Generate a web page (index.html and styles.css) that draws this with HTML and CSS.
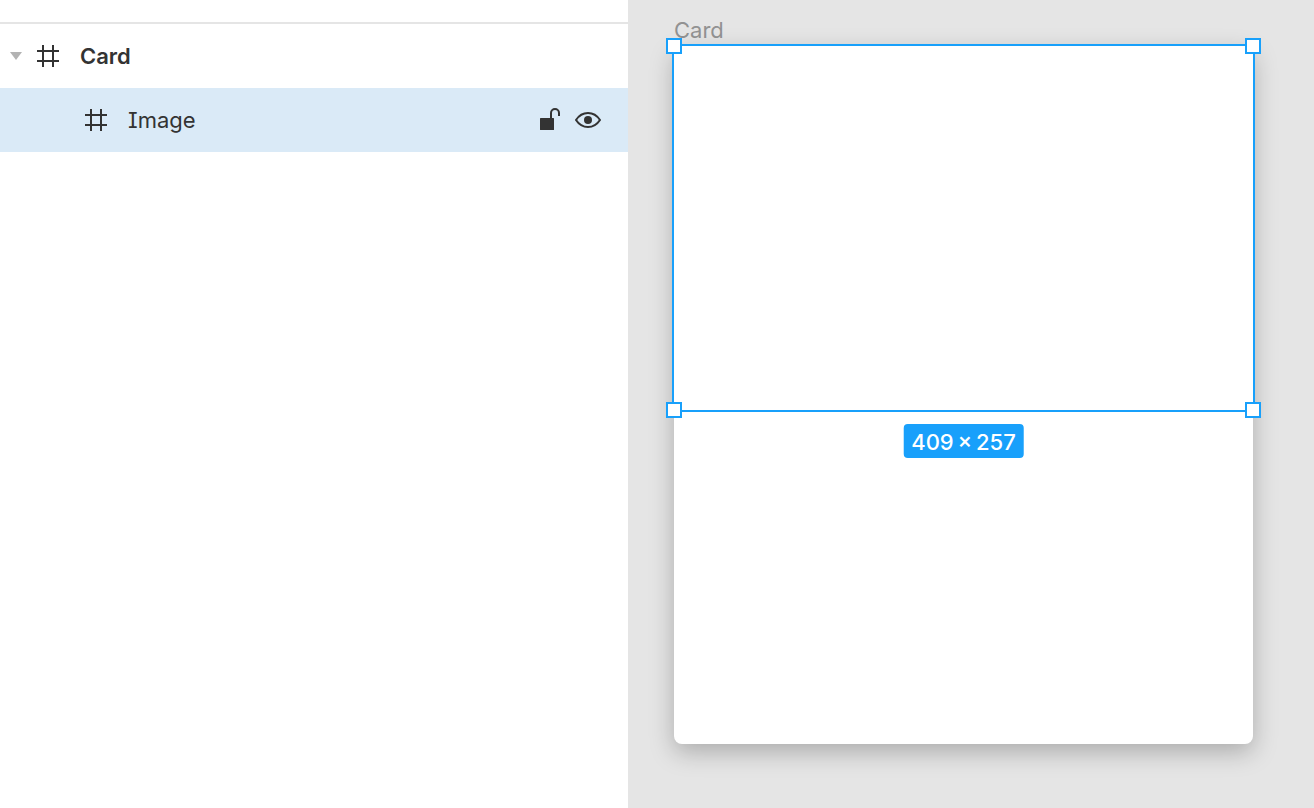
FILE: index.html
```html
<!DOCTYPE html>
<html lang="en">

<head>
    <meta charset="UTF-8">
    <meta name="viewport" content="width=device-width, initial-scale=1.0">
    <title>Card</title>
    <link rel="stylesheet" href="styles.css">
</head>

<body>
    <div class="editor">
        <aside class="layers">
            <div class="layers-header"></div>
            <ul class="layer-list">
                <li class="layer">
                    <button type="button" class="toggle" aria-label="Collapse Card" aria-expanded="true">
                        <svg width="12" height="8" viewBox="0 0 12 8"><path d="M0 0h12L6 8z" fill="#b3b3b3"/></svg>
                    </button>
                    <svg class="frame-icon" width="22" height="22" viewBox="0 0 22 22"><path d="M6 0v22M16 0v22M0 6h22M0 16h22" stroke="#333" stroke-width="2"/></svg>
                    <span class="layer-name bold">Card</span>
                </li>
                <li class="layer child selected">
                    <svg class="frame-icon" width="22" height="22" viewBox="0 0 22 22"><path d="M6 0v22M16 0v22M0 6h22M0 16h22" stroke="#333" stroke-width="2"/></svg>
                    <span class="layer-name">Image</span>
                    <span class="actions">
                        <button type="button" aria-label="Lock layer">
                            <svg width="20" height="24" viewBox="0 0 20 24">
                                <rect y="10" width="14" height="12" rx="0.5" fill="#333"/>
                                <path d="M11 11V5a4 4 0 0 1 8 0v3" fill="none" stroke="#333" stroke-width="2"/>
                            </svg>
                        </button>
                        <button type="button" aria-label="Hide layer">
                            <svg width="26" height="16" viewBox="0 0 26 16">
                                <path d="M1 8C4 3.400 8.200 1 13 1s9 2.400 12 7c-3 4.600-7.200 7-12 7S4 12.600 1 8z" fill="none" stroke="#333" stroke-width="2"/>
                                <circle cx="13" cy="8" r="4" fill="#333"/>
                            </svg>
                        </button>
                    </span>
                </li>
            </ul>
        </aside>

        <main class="canvas">
            <div class="frame-label">Card</div>
            <div class="card">
                <div class="image-frame">
                    <span class="handle top left"></span>
                    <span class="handle top right"></span>
                    <span class="handle bottom left"></span>
                    <span class="handle bottom right"></span>
                    <span class="size-badge">409&thinsp;×&thinsp;257</span>
                </div>
            </div>
        </main>
    </div>
</body>

</html>
```
FILE: styles.css
```css
* {
    box-sizing: border-box;
}

body {
    margin: 0;
    font-family: Inter, "Liberation Sans", sans-serif;
    font-size: 22px;
    line-height: 32px;
    color: #333;
    background-color: #fff;
}

button {
    display: flex;
    padding: 0;
    border: none;
    background: none;
    cursor: pointer;
}

.editor {
    display: grid;
    grid-template-columns: 628fr 686fr;
    min-height: 100vh;
}

.layers-header {
    height: 24px;
    border-bottom: 2px solid #e5e5e5;
}

.layer-list {
    margin: 0;
    padding: 0;
    list-style: none;
}

.layer {
    display: flex;
    align-items: center;
    height: 64px;
    padding: 0 27px 0 10px;
}

.layer.child {
    padding-left: 85px;
}

.layer.selected {
    background-color: #daeaf7;
}

.toggle {
    margin-right: 15px;
}

.layer-name {
    margin-left: 21px;
    font-feature-settings: "cv08";
}

.layer-name.bold {
    font-weight: 600;
}

.actions {
    display: flex;
    align-items: center;
    gap: 15px;
    margin-left: auto;
}

.canvas {
    display: flex;
    flex-direction: column;
    padding: 14px 61px 64px 46px;
    background-color: #e5e5e5;
}

.frame-label {
    color: #929292;
}

.card {
    flex: 1;
    border-radius: 8px;
    background-color: #fff;
    box-shadow: 0 8px 24px rgba(0, 0, 0, 0.25);
}

/* selected frame */
.image-frame {
    position: relative;
    aspect-ratio: 409 / 257;
    outline: 2px solid #18a0fb;
}

.handle {
    position: absolute;
    width: 16px;
    height: 16px;
    border: 2px solid #18a0fb;
    background-color: #fff;
}

.handle.top {
    top: -8px;
}

.handle.bottom {
    bottom: -8px;
}

.handle.left {
    left: -8px;
}

.handle.right {
    right: -8px;
}

.size-badge {
    position: absolute;
    top: 100%;
    left: 50%;
    transform: translateX(-50%);
    margin-top: 14px;
    padding: 2px 8px 0;
    border-radius: 4px;
    font-weight: 500;
    white-space: nowrap;
    color: #fff;
    background-color: #18a0fb;
}
```
